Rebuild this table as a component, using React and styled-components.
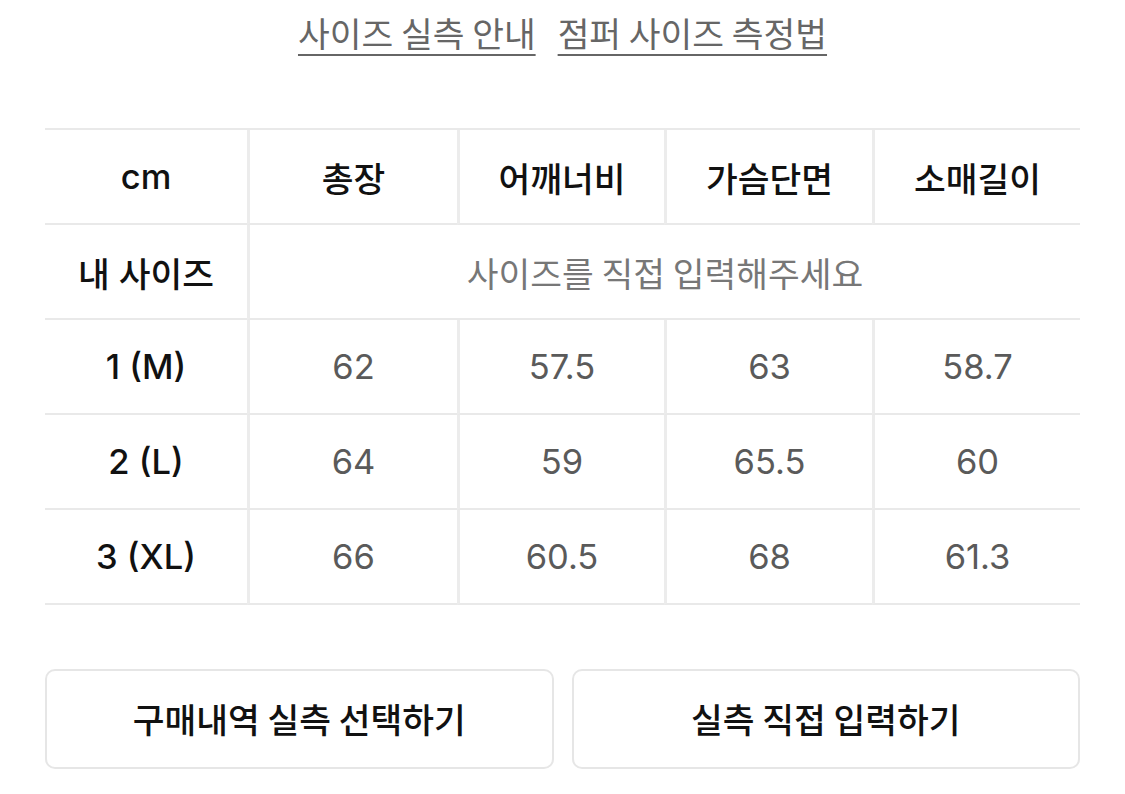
import React from 'react';
import styled, { createGlobalStyle } from 'styled-components';

const GlobalStyle = createGlobalStyle`
  body {
    margin: 0;
    background: #fff;
    font-family: Inter, "Noto Sans CJK KR", sans-serif;
  }
`;

const headers = ['총장', '어깨너비', '가슴단면', '소매길이'];

const sizes = [
  { label: '1 (M)', values: ['62', '57.5', '63', '58.7'] },
  { label: '2 (L)', values: ['64', '59', '65.5', '60'] },
  { label: '3 (XL)', values: ['66', '60.5', '68', '61.3'] },
];

const Page = styled.div`
  padding: 0 45px;
`;

const Links = styled.div`
  display: flex;
  justify-content: center;
  gap: 22px;
  padding-top: 10px;
  height: 58px;
`;

const LinkText = styled.a`
  font-family: "Noto Sans CJK KR", sans-serif;
  font-size: 34.5px;
  line-height: 44px;
  color: #666;
  text-decoration: underline;
  text-decoration-thickness: 2px;
  text-underline-offset: 7px;
  cursor: pointer;
`;

const Table = styled.div`
  margin-top: 60px;
  display: grid;
  grid-template-columns: 202px 210px 207px 208px 1fr;
  border-top: 2px solid #e9e9e9;
`;

const Cell = styled.div`
  height: 93px;
  display: flex;
  align-items: center;
  justify-content: center;
  border-bottom: 2px solid #e9e9e9;
  border-left: ${p => (p.$first ? 'none' : '3px solid #ececec')};
  font-size: 34.5px;
  font-weight: ${p => (p.$head ? 500 : 400)};
  color: ${p => (p.$head ? '#111' : '#5a5a5a')};
  grid-column: ${p => (p.$span ? `span ${p.$span}` : 'auto')};
`;

const Placeholder = styled.span`
  font-family: "Noto Sans CJK KR", sans-serif;
  font-size: 34.5px;
  color: #777;
`;

const Buttons = styled.div`
  margin-top: 64px;
  display: grid;
  grid-template-columns: 1fr 1fr;
  gap: 18px;
`;

const Button = styled.button`
  height: 100px;
  padding-bottom: 4px;
  background: #fff;
  border: 2px solid #e6e6e6;
  border-radius: 10px;
  font-family: "Noto Sans CJK KR", sans-serif;
  font-size: 34.5px;
  font-weight: 500;
  color: #111;
  cursor: pointer;
`;

export default function App() {
  return (
    <Page>
      <GlobalStyle />
      <Links>
        <LinkText>사이즈 실측 안내</LinkText>
        <LinkText>점퍼 사이즈 측정법</LinkText>
      </Links>
      <Table>
        <Cell $first $head>cm</Cell>
        {headers.map(h => (
          <Cell key={h} $head>{h}</Cell>
        ))}
        <Cell $first $head>내 사이즈</Cell>
        <Cell $span={4}>
          <Placeholder>사이즈를 직접 입력해주세요</Placeholder>
        </Cell>
        {sizes.map(s => (
          <React.Fragment key={s.label}>
            <Cell $first $head>{s.label}</Cell>
            {s.values.map((v, i) => (
              <Cell key={i}>{v}</Cell>
            ))}
          </React.Fragment>
        ))}
      </Table>
      <Buttons>
        <Button>구매내역 실측 선택하기</Button>
        <Button>실측 직접 입력하기</Button>
      </Buttons>
    </Page>
  );
}
